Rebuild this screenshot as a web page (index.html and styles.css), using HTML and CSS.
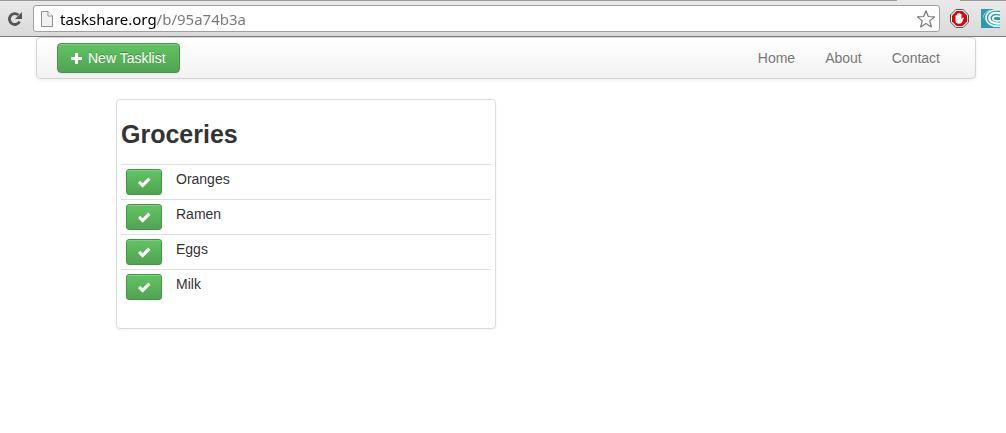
FILE: index.html
```html
<!DOCTYPE html>
<html lang="en">
<head>
    <meta charset="UTF-8">
    <title>Taskshare</title>
    <meta name="viewport" content="width=device-width,initial-scale=1">
    <link rel="stylesheet" href="styles.css">
</head>
<body>

    <div class="toolbar">
        <button class="tool" type="button" aria-label="Reload">
            <svg width="16" height="16" viewBox="0 0 16 16">
                <path d="M12.600 10.600A5.400 5.400 0 1 1 11.400 4" fill="none" stroke="#555" stroke-width="2.800"/>
                <path d="M15 1v7H8z" fill="#555"/>
            </svg>
        </button>
        <div class="omnibox">
            <svg width="12" height="16" viewBox="0 0 12 16">
                <path d="M.5.5h6.500l4.500 4.500v10.500H.5z" fill="#f1f1f1" stroke="#8f8f8f"/>
                <path d="M7 .5V5h4.500" fill="#fff" stroke="#8f8f8f"/>
            </svg>
            <input class="address" type="text" aria-label="Address" value="taskshare.org/b/95a74b3a">
            <button class="tool" type="button" aria-label="Bookmark">
                <svg width="20" height="20" viewBox="0 0 20 20">
                    <path d="M10 1.800l2.300 5.700 6.200.4-4.700 4 1.500 6L10 14.600l-5.300 3.300 1.500-6-4.700-4 6.200-.4z" fill="#fff" stroke="#777" stroke-width="1.200" stroke-linejoin="round"/>
                </svg>
            </button>
        </div>
        <div class="extensions">
            <button class="tool" type="button" aria-label="Ad blocker">
                <svg width="19" height="19" viewBox="0 0 19 19">
                    <path d="M5.900.5h7.200l5.400 5.400v7.200l-5.400 5.400H5.900L.5 13.100V5.900z" fill="#fff" stroke="#555"/>
                    <path d="M6.500 2h6L17 6.500v6L12.500 17h-6L2 12.500v-6z" fill="#e60000"/>
                    <path d="M5.500 10.200V6.500q.7-.9 1.400 0V5q.8-1 1.500 0v-.7q.9-1 1.600 0V5q.8-.9 1.500 0v5l1.400-1.500q1.300-.3 1 .7l-1.900 4q-.9 1.600-2.900 1.600-3.600 0-3.600-3.300z" fill="#fff"/>
                </svg>
            </button>
            <button class="tool" type="button" aria-label="Swirl extension">
                <svg width="19" height="19" viewBox="0 0 19 19">
                    <path d="M0 0h19v19H0z" fill="#2a9bb0"/>
                    <path d="M19 1C10.500 0 5 3.500 5 9c0 5 5.500 8.800 14 8.200" fill="none" stroke="#fff" stroke-width="1.600"/>
                    <path d="M19 4.500C13 2.500 8.300 5 8.300 9c0 3.600 4 6 10.700 5.500" fill="none" stroke="#fff" stroke-width="2.200"/>
                    <path d="M19 7.500c-4.500-1-7.300 0-7.300 2s2.800 2.800 7.300 2.300" fill="none" stroke="#fff" stroke-width="1.600"/>
                    <path d="M9.500 1C5 2.500 2.500 5 2.500 8.500" fill="none" stroke="#bfe3ea" stroke-width=".8"/>
                </svg>
            </button>
        </div>
    </div>

    <div class="container">
        <div class="navbar">
            <button class="btn" type="button">
                <svg width="14" height="14" viewBox="0 0 14 14">
                    <path d="M5 2h3v4h4v3H8v4H5V9H1V6h4z" fill="#fff"/>
                </svg>
                New Tasklist
            </button>
            <nav class="nav">
                <a href="#">Home</a>
                <a href="#">About</a>
                <a href="#">Contact</a>
            </nav>
        </div>

        <div class="tasklist">
            <h2>Groceries</h2>
            <table class="table">
                <tr>
                    <td class="check">
                        <button class="btn btn_small" type="button" aria-label="Complete Oranges">
                            <svg width="14" height="14" viewBox="0 0 14 14"><path d="M1 8l2.200-2.200L5.600 8.200 11.200 2.500l2.300 2.300-7.900 8z" fill="#fff"/></svg>
                        </button>
                    </td>
                    <td>Oranges</td>
                </tr>
                <tr>
                    <td class="check">
                        <button class="btn btn_small" type="button" aria-label="Complete Ramen">
                            <svg width="14" height="14" viewBox="0 0 14 14"><path d="M1 8l2.200-2.200L5.600 8.200 11.200 2.500l2.300 2.300-7.900 8z" fill="#fff"/></svg>
                        </button>
                    </td>
                    <td>Ramen</td>
                </tr>
                <tr>
                    <td class="check">
                        <button class="btn btn_small" type="button" aria-label="Complete Eggs">
                            <svg width="14" height="14" viewBox="0 0 14 14"><path d="M1 8l2.200-2.200L5.600 8.200 11.200 2.500l2.300 2.300-7.900 8z" fill="#fff"/></svg>
                        </button>
                    </td>
                    <td>Eggs</td>
                </tr>
                <tr>
                    <td class="check">
                        <button class="btn btn_small" type="button" aria-label="Complete Milk">
                            <svg width="14" height="14" viewBox="0 0 14 14"><path d="M1 8l2.200-2.200L5.600 8.200 11.200 2.500l2.300 2.300-7.900 8z" fill="#fff"/></svg>
                        </button>
                    </td>
                    <td>Milk</td>
                </tr>
            </table>
        </div>
    </div>

</body>
</html>
```
FILE: styles.css
```css
*{
    box-sizing:border-box;
}
body{
    margin:0;
    background:#fff;
    color:#333;
    font-family:"Helvetica Neue",Helvetica,"Liberation Sans",Arial,sans-serif;
    font-size:14px;
    line-height:20px;
}
svg{
    display:block;
    flex:none;
}

/* browser bar */
.toolbar{
    display:flex;
    align-items:center;
    gap:10px;
    padding:5px 6px 4px 7px;
    border-bottom:1px solid #7d7d7d;
    /* bottom edge of the tab strip, open under the new tab button */
    background:
        linear-gradient(#999,#999) 0 0/calc(100% - 109px) 1px no-repeat,
        linear-gradient(#999,#999) 100% 0/46px 1px no-repeat,
        linear-gradient(#e9e9e9,#dadada);
}
.tool{
    flex:none;
    padding:0;
    border:0;
    background:none;
}
.extensions{
    display:flex;
    gap:12px;
}
.omnibox{
    flex:1;
    display:flex;
    align-items:center;
    height:27px;
    padding:0 3px 0 7px;
    border:1px solid #a0a0a0;
    border-radius:3px;
    background:#fff;
}
.address{
    flex:1;
    min-width:0;
    height:24px;
    padding:0 0 0 7px;
    border:0;
    outline:0;
    /* host name is black, path is grey */
    background:linear-gradient(90deg,#000 103px,#777 103px);
    -webkit-background-clip:text;
    background-clip:text;
    color:transparent;
    font-family:"Lucida Grande","Noto Sans",sans-serif;
    font-size:15px;
}

/* page */
.container{
    margin:0 30px 0 36px;
}
.navbar{
    display:flex;
    justify-content:space-between;
    align-items:center;
    min-height:42px;
    padding:0 20px;
    border:1px solid #d4d4d4;
    border-radius:4px;
    background:linear-gradient(#fff,#f2f2f2);
    box-shadow:0 1px 4px rgba(0,0,0,.065);
}
.nav{
    display:flex;
}
.nav a{
    padding:10px 15px;
    color:#777;
    text-decoration:none;
    text-shadow:0 1px 0 #fff;
}
.btn{
    display:flex;
    align-items:center;
    gap:4px;
    padding:4px 13px 4px 12px;
    border:1px solid #499249;
    border-radius:4px;
    background:linear-gradient(#62c462,#51a351);
    box-shadow:inset 0 1px 0 rgba(255,255,255,.2),0 1px 2px rgba(0,0,0,.05);
    color:#fff;
    font:inherit;
    text-shadow:0 -1px 0 rgba(0,0,0,.25);
}
.btn_small{
    padding:5px 10px;
    border-radius:3px;
}
.tasklist{
    max-width:380px;
    margin:20px 0 20px 80px;
    padding:4px;
    border:1px solid #ddd;
    border-radius:4px;
    box-shadow:0 1px 3px rgba(0,0,0,.055);
}
.tasklist h2{
    margin:10px 0;
    font-size:25px;
    line-height:40px;
}
.table{
    width:100%;
    margin-bottom:20px;
    border-collapse:separate;
    border-spacing:0;
}
.table td{
    padding:4px 5px;
    border-top:1px solid #ddd;
    vertical-align:top;
}
.table .check{
    width:50px;
}
```
